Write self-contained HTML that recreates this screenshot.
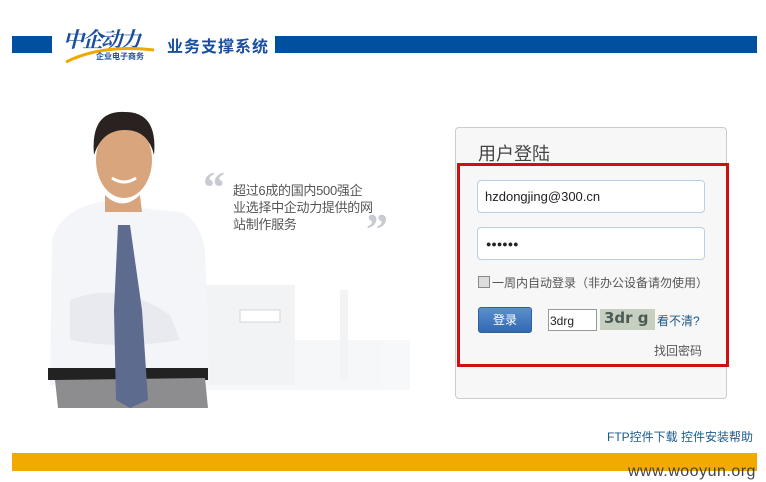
<!DOCTYPE html>
<html><head><meta charset="utf-8"><style>
*{margin:0;padding:0;box-sizing:border-box}
body{width:766px;height:482px;background:#fff;position:relative;overflow:hidden;font-family:"Liberation Sans","Noto Sans CJK SC",sans-serif}
.a{position:absolute}
</style></head><body>
<div class="a" style="left:12px;top:36px;width:40px;height:17px;background:#0050a0"></div>
<div class="a" style="left:275px;top:36px;width:482px;height:17px;background:#0050a0"></div>
<div class="a" style="left:63px;top:24px;font:italic bold 21px 'Liberation Serif','Noto Serif CJK SC',serif;color:#1a4fa0;letter-spacing:-2px">中企动力</div>
<svg class="a" style="left:62px;top:40px" width="100" height="25"><path d="M4 22 Q40 4 92 10" stroke="#f0a800" stroke-width="3" fill="none"/></svg>
<div class="a" style="left:96px;top:51px;font:bold 8px 'Noto Sans CJK SC',sans-serif;color:#1a4fa0">企业电子商务</div>
<div class="a" style="left:167px;top:33px;font:bold 16px 'Noto Sans CJK SC',sans-serif;color:#1a4fa0;letter-spacing:1px">业务支撑系统</div>

<svg class="a" style="left:30px;top:100px" width="380" height="320">
<g opacity=".8">
<rect x="150" y="240" width="230" height="50" fill="#f4f6f8"/>
<rect x="175" y="185" width="90" height="100" fill="#eef1f3"/>
<rect x="210" y="210" width="40" height="12" fill="#fff" stroke="#ccc"/>
<rect x="310" y="190" width="8" height="90" fill="#eef1f3"/>
</g>
<path d="M22 140 Q30 110 70 102 L85 100 L110 108 L150 112 Q170 120 175 150 L180 285 L20 285 Z" fill="#f4f5f8"/>
<path d="M40 200 Q90 180 140 215 L150 240 Q90 250 40 240 Z" fill="#e8eaef"/>
<rect x="18" y="268" width="160" height="12" fill="#222"/>
<path d="M25 280 L175 278 L178 308 L28 308 Z" fill="#8d8d8f"/>
<path d="M88 125 L100 125 L112 210 L118 300 L100 308 L86 300 L84 210 Z" fill="#5d6b8f"/>
<path d="M75 95 Q92 112 110 95 L112 112 L75 112 Z" fill="#d7a47e"/>
<ellipse cx="94" cy="60" rx="28" ry="38" fill="#d9a57d"/>
<path d="M64 55 Q60 10 95 12 Q128 12 124 55 Q118 30 95 30 Q72 30 64 55 Z" fill="#2a2220"/>
<path d="M82 78 Q94 86 106 78" stroke="#fff" stroke-width="3" fill="none"/>
</svg>
<div class="a" style="left:203px;top:166px;font:bold 44px 'Liberation Serif',serif;color:#c8ccd2;line-height:44px">“</div>
<div class="a" style="left:366px;top:208px;font:bold 44px 'Liberation Serif',serif;color:#c8ccd2;line-height:44px">”</div>
<div class="a" style="left:233px;top:182px;white-space:nowrap;font-size:13px;line-height:17px;color:#555;letter-spacing:-0.3px">超过6成的国内500强企<br>业选择中企动力提供的网<br>站制作服务</div>

<div class="a" style="left:455px;top:127px;width:272px;height:272px;border:1px solid #ccc;border-radius:4px;background:#f7f7f7"></div>
<div class="a" style="left:478px;top:140px;font-size:18px;color:#444">用户登陆</div>
<div class="a" style="left:457px;top:163px;width:272px;height:204px;border:3px solid #cc1111"></div>
<div class="a" style="left:477px;top:180px;width:228px;height:33px;border:1px solid #b8d0e6;border-radius:4px;background:#fff;font-size:13px;color:#222;padding:8px 0 0 7px">hzdongjing@300.cn</div>
<div class="a" style="left:477px;top:227px;width:228px;height:33px;border:1px solid #b8d0e6;border-radius:4px;background:#fff;font-size:9px;color:#222;padding:11px 0 0 8px">●●●●●●</div>
<div class="a" style="left:478px;top:276px;width:12px;height:12px;border:1px solid #888;background:#ddd"></div>
<div class="a" style="left:492px;top:274px;font-size:12px;color:#555">一周内自动登录（非办公设备请勿使用）</div>
<div class="a" style="left:478px;top:307px;width:54px;height:26px;border-radius:3px;background:linear-gradient(#5a8fd0,#3468b0);border:1px solid #2e5f9e;color:#fff;font-size:12px;text-align:center;line-height:24px">登录</div>
<div class="a" style="left:548px;top:309px;width:49px;height:22px;border:1px solid #999;background:#fff;font-size:12px;padding:4px 0 0 1px;color:#222">3drg</div>
<div class="a" style="left:600px;top:309px;width:55px;height:21px;background:#c7cfc0;font:bold 15px 'DejaVu Sans',sans-serif;color:#4a5a55;padding-left:4px;line-height:19px">3dr g</div>
<div class="a" style="left:657px;top:312px;font-size:12px;color:#1a5a8a">看不清?</div>
<div class="a" style="left:654px;top:342px;font-size:12px;color:#555">找回密码</div>

<div class="a" style="left:607px;top:428px;font-size:12px;color:#1a5a8a">FTP控件下载 控件安装帮助</div>
<div class="a" style="left:12px;top:453px;width:745px;height:18px;background:#f2a900"></div>
<div class="a" style="left:628px;top:463px;font-size:16px;color:#444;letter-spacing:.5px">www.wooyun.org</div>
</body></html>
